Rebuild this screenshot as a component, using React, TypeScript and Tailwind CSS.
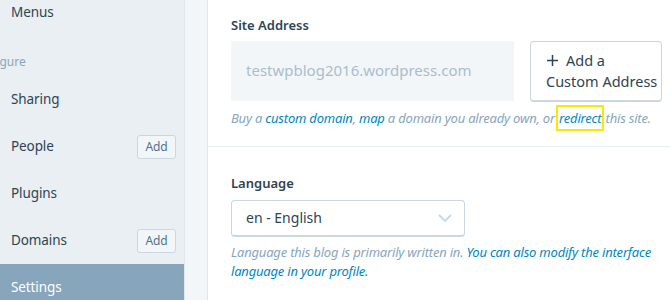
import React from 'react';

const font = { fontFamily: '"Noto Sans", "Open Sans", sans-serif' };

const navItems = [
  { label: 'Sharing' },
  { label: 'People', hasAdd: true },
  { label: 'Plugins' },
  { label: 'Domains', hasAdd: true },
  { label: 'Settings', active: true },
];

function AddButton() {
  return (
    <span className="flex h-[24px] w-[39px] items-center justify-center rounded-[3px] border border-[#c8d7e1] bg-[#f3f6f8] text-[12px] text-[#4f748e]">
      Add
    </span>
  );
}

function Sidebar() {
  return (
    <aside className="flex w-[185px] shrink-0 flex-col overflow-hidden border-r border-[#dfe7ec] bg-[#e9eff3]">
      <div className="-mt-[11px] flex h-[46px] shrink-0 items-center pl-[11px] text-[13.5px] tracking-[-0.1px] text-[#2e4453]">
        Menus
      </div>
      {/* section header, scrolled partly out of view */}
      <div className="flex h-[41px] shrink-0 items-center pt-[12px] text-[12px] text-[#87a6bc]">
        <span className="-ml-[30px]">Configure</span>
      </div>
      {navItems.map((item) => (
        <div
          key={item.label}
          className={`flex h-[47px] shrink-0 items-center justify-between pr-[8px] pl-[11px] text-[13.5px] tracking-[-0.1px] ${
            item.active ? 'bg-[#87a6bc] text-white' : 'text-[#2e4453]'
          }`}
        >
          <span>{item.label}</span>
          {item.hasAdd && <AddButton />}
        </div>
      ))}
    </aside>
  );
}

export default function App() {
  return (
    <div className="flex h-[300px] w-[670px] overflow-hidden bg-[#f3f6f8]" style={font}>
      <Sidebar />
      <div className="w-[22px] shrink-0 bg-[#f3f6f8]" />
      <main className="flex flex-1 flex-col border-l border-[#dfe7ec] bg-white">
        {/* Site address */}
        <section className="h-[147px] shrink-0 border-b border-[#e9eff3] pt-[16px] pl-[23px]">
          <div className="text-[13px] font-semibold text-[#2e4453]">Site Address</div>
          <div className="mt-[5px] flex gap-[16px]">
            <div className="flex h-[60px] w-[283px] items-center bg-[#f3f6f8] pl-[15px] text-[15px] text-[#a8bece]">
              testwpblog2016.wordpress.com
            </div>
            <button className="flex h-[61px] w-[132px] flex-col items-start justify-center rounded-[4px] border border-b-2 border-[#c8d7e1] bg-white pl-[15px] text-[14.5px] leading-[21px] text-[#2e4453]">
              <span className="flex items-center gap-[8px] pl-[1px]">
                <svg width="11" height="11" viewBox="0 0 11 11" fill="none" stroke="#2e4453" strokeWidth="1.5">
                  <path d="M5.5 0v11M0 5.5h11" />
                </svg>
                Add a
              </span>
              <span>Custom Address</span>
            </button>
          </div>
          <p className="mt-[4px] text-[13px] italic leading-[24px] tracking-[-0.2px] text-[#87a6bc]">
            Buy a <span className="text-[#0087be]">custom domain</span>,{' '}
            <span className="text-[#0087be]">map</span> a domain you already own, or{' '}
            <span className="-mx-[2px] border-2 border-[#ffe600] px-[1px] py-[2px] text-[#0087be]">redirect</span> this site.
          </p>
        </section>

        {/* Language */}
        <section className="pt-[27px] pl-[23px]">
          <div className="text-[13px] font-semibold text-[#2e4453]">Language</div>
          <div className="mt-[6px] flex h-[37px] w-[234px] items-center justify-between rounded-[4px] border border-b-2 border-[#c8d7e1] bg-white pr-[12px] pl-[14px] text-[14px] text-[#2e4453]">
            <span>en - English</span>
            <svg width="14" height="8" viewBox="0 0 14 8" fill="none" stroke="#c8d7e1" strokeWidth="1.8">
              <path d="M1 1l6 6 6-6" />
            </svg>
          </div>
          <p className="mt-[6px] text-[13px] italic leading-[19px] tracking-[-0.2px] text-[#87a6bc]">
            Language this blog is primarily written in.{' '}
            <span className="text-[#0087be]">You can also modify the interface language in your profile.</span>
          </p>
        </section>
      </main>
    </div>
  );
}
